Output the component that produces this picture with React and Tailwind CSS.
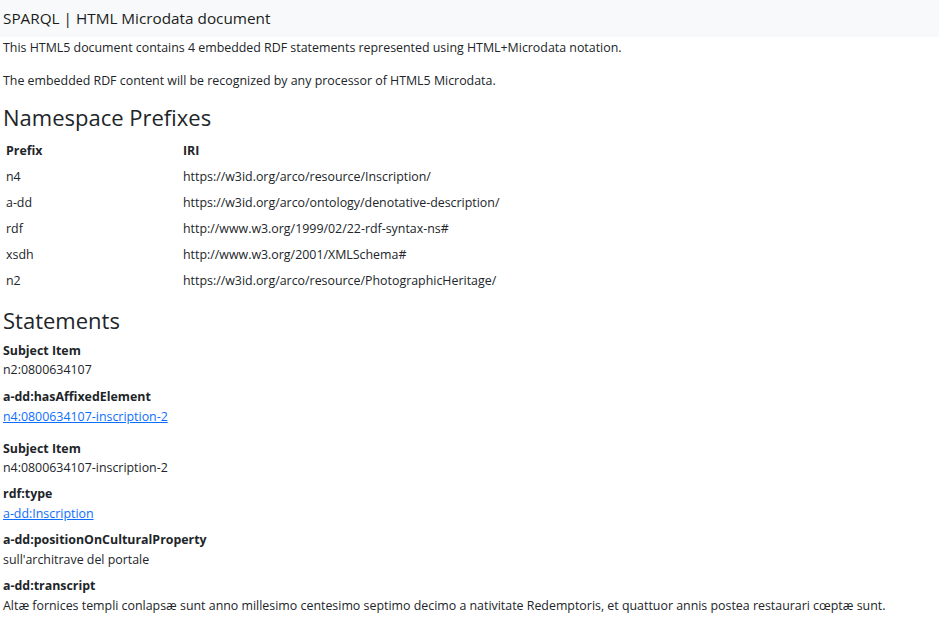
import React from "react";

const prefixes = [
  ["n4", "https://w3id.org/arco/resource/Inscription/"],
  ["a-dd", "https://w3id.org/arco/ontology/denotative-description/"],
  ["rdf", "http://www.w3.org/1999/02/22-rdf-syntax-ns#"],
  ["xsdh", "http://www.w3.org/2001/XMLSchema#"],
  ["n2", "https://w3id.org/arco/resource/PhotographicHeritage/"],
];

const Prop = ({ label, children, className = "mt-[6px]" }) => (
  <div className={className}>
    <div className="font-bold leading-[19px]">{label}</div>
    <div className="leading-[20px] pt-[1px]">{children}</div>
  </div>
);

const Link = ({ children }) => (
  <a href="#" className="text-[#0d6efd] underline">
    {children}
  </a>
);

export default function App() {
  return (
    <div className="min-h-[635px] bg-white text-[#212529] text-[12.4px] font-['Open_Sans','Noto_Sans',sans-serif]">
      <div className="bg-[#f8f9fa] h-[37px] flex items-center px-[3px] text-[15.3px] text-[#1a1d20]">
        SPARQL | HTML Microdata document
      </div>
      <div className="px-[3px]">
        <p className="mt-[1px] leading-[20px]">
          This HTML5 document contains 4 embedded RDF statements represented using HTML+Microdata notation.
        </p>
        <p className="mt-[13px] leading-[20px]">
          The embedded RDF content will be recognized by any processor of HTML5 Microdata.
        </p>
        <h2 className="mt-[11px] text-[22px] font-medium leading-[30px]">Namespace Prefixes</h2>
        <table className="mt-[6px] border-collapse">
          <thead>
            <tr>
              <th className="text-left font-bold w-[180px] px-[3px] h-[26px]">Prefix</th>
              <th className="text-left font-bold px-0 h-[26px]">IRI</th>
            </tr>
          </thead>
          <tbody>
            {prefixes.map(([p, iri]) => (
              <tr key={p}>
                <td className="px-[3px] h-[26px]">{p}</td>
                <td className="h-[26px]">{iri}</td>
              </tr>
            ))}
          </tbody>
        </table>
        <h2 className="mt-[11px] text-[22px] font-medium leading-[30px]">Statements</h2>
        <div className="mt-[6px]">
          <div className="font-bold leading-[19px]">Subject Item</div>
          <div className="leading-[20px]">n2:0800634107</div>
          <Prop label="a-dd:hasAffixedElement" className="mt-[7px]">
            <Link>n4:0800634107-inscription-2</Link>
          </Prop>
        </div>
        <div className="mt-[12px]">
          <div className="font-bold leading-[19px]">Subject Item</div>
          <div className="leading-[20px]">n4:0800634107-inscription-2</div>
          <Prop label="rdf:type">
            <Link>a-dd:Inscription</Link>
          </Prop>
          <Prop label="a-dd:positionOnCulturalProperty">sull'architrave del portale</Prop>
          <Prop label="a-dd:transcript">
            Altæ fornices templi conlapsæ sunt anno millesimo centesimo septimo decimo a nativitate Redemptoris, et quattuor annis postea restaurari cœptæ sunt.
          </Prop>
        </div>
      </div>
    </div>
  );
}
